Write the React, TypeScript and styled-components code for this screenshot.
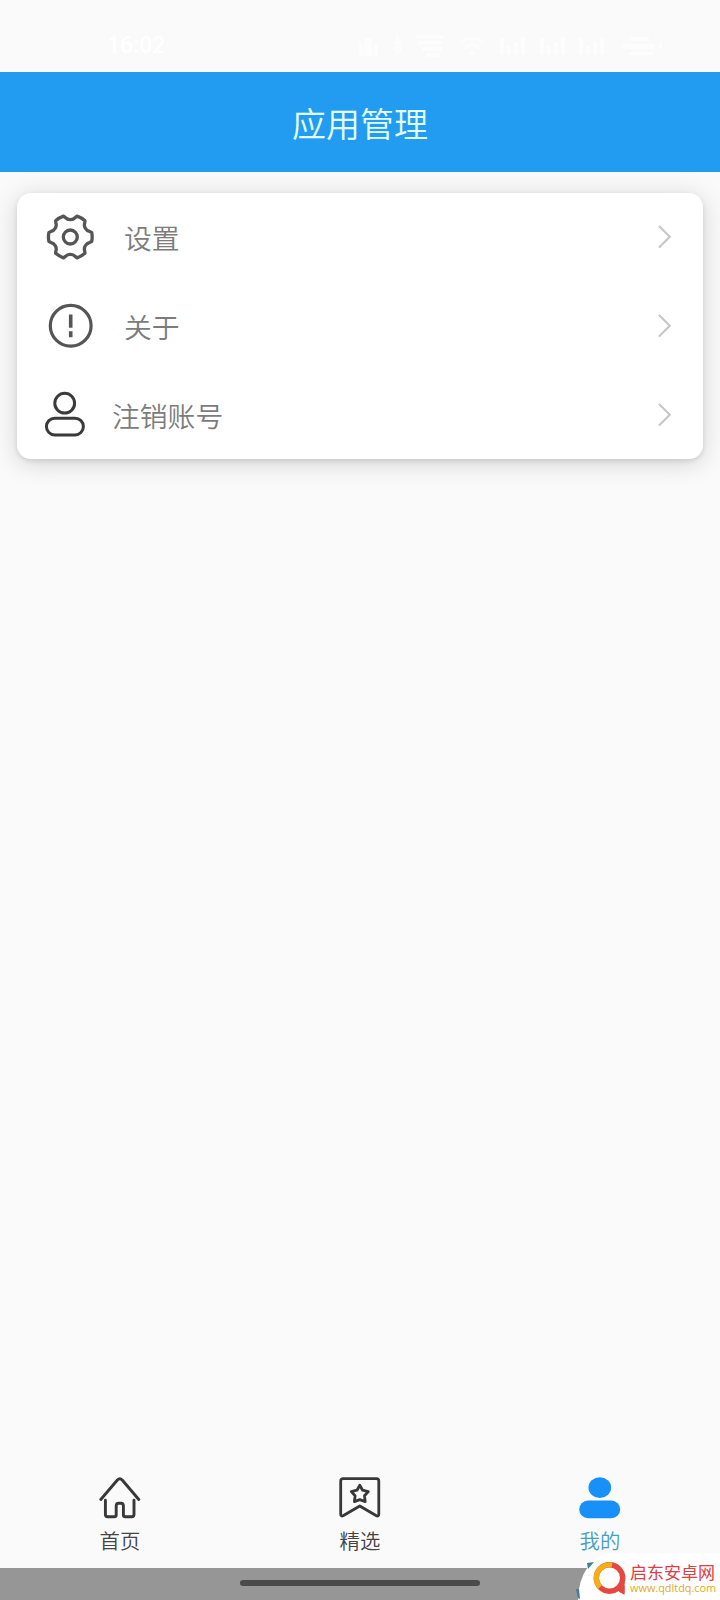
import React from "react";
import styled, { createGlobalStyle } from "styled-components";

const Global = createGlobalStyle`
  * { box-sizing: border-box; }
  html, body { margin: 0; padding: 0; background: #fafafa; }
  body { font-family: "Noto Sans CJK SC", sans-serif; font-weight: 350; overflow: hidden; }
`;

const Screen = styled.div`
  position: relative;
  display: flex;
  flex-direction: column;
  width: 720px;
  height: 1600px;
  overflow: hidden;
  background: #fafafa;
`;

const StatusBar = styled.div`
  display: flex;
  justify-content: space-between;
  align-items: center;
  flex: 0 0 72px;
  padding: 20px 57px 0 107px;
  color: #fff;
`;

const Clock = styled.span`
  font: 500 23px/28px Roboto, sans-serif;
`;

const StatusIcons = styled.div`
  display: flex;
  align-items: center;
  width: 306px;
  justify-content: space-between;
  opacity: 0.7;
`;

const AppBar = styled.header`
  display: flex;
  align-items: center;
  justify-content: center;
  flex: 0 0 100px;
  background: #219cf0;
  color: #e4ffff;
  font-size: 34px;
  line-height: 50px;
  padding-top: 1px;
`;

const Content = styled.main`
  flex: 1;
  padding: 21px 17px 0;
`;

const Card = styled.section`
  display: flex;
  flex-direction: column;
  height: 266px;
  border-radius: 14px;
  background: #fff;
  box-shadow: 0 2px 5px rgba(0, 0, 0, 0.1), 0 4px 26px rgba(0, 0, 0, 0.16);
`;

const Row = styled.div<{ $start: number; $gap: number }>`
  display: flex;
  align-items: center;
  flex: 1;
  padding: 0 31px 0 ${(p) => p.$start}px;
  gap: ${(p) => p.$gap}px;
`;

const RowLabel = styled.span`
  flex: 1;
  font-size: 27.8px;
  line-height: 40px;
  color: #7c7c7c;
`;

const TabBar = styled.nav`
  display: flex;
  flex: 0 0 98px;
`;

const Tab = styled.div<{ $active?: boolean }>`
  display: flex;
  flex: 1;
  flex-direction: column;
  align-items: center;
  padding-top: 6px;
  gap: 5px;
  font-size: 20.4px;
  line-height: 30px;
  color: ${(p) => (p.$active ? "#459fbd" : "#444")};
`;

const GestureBar = styled.footer`
  display: flex;
  justify-content: center;
  flex: 0 0 32px;
  padding-top: 12px;
  background: #969696;
`;

const GestureHandle = styled.div`
  width: 240px;
  height: 6px;
  border-radius: 3px;
  background: #4a4a4a;
`;

const Watermark = styled.div`
  position: absolute;
  right: 0;
  bottom: 0;
  display: flex;
  align-items: center;
  width: 142px;
  height: 47px;
  padding: 3px 0 0 14px;
  gap: 3px;
  background: #fff;
  border-radius: 34px 0 0 0 / 47px 0 0 0;
`;

const WatermarkEdge = styled.svg`
  position: absolute;
  right: 124px;
  bottom: 0;
`;

const WatermarkText = styled.div`
  display: flex;
  flex-direction: column;
`;

const SiteName = styled.span`
  font-size: 17px;
  line-height: 18px;
  font-weight: 400;
  color: #dc4045;
  white-space: nowrap;
`;

const SiteUrl = styled.span`
  font: 10.9px/13px "Open Sans", sans-serif;
  color: #e6a820;
  white-space: nowrap;
`;

const gearPath = (() => {
  const at = (deg: number, r: number) => {
    const a = (deg * Math.PI) / 180;
    return `${(25.3 + r * Math.cos(a)).toFixed(2)} ${(25 + r * Math.sin(a)).toFixed(2)}`;
  };
  let d = "";
  for (let i = 0; i < 6; i++) {
    const t = i * 60;
    d += `${i ? "L" : "M"}${at(t - 12, 21.9)}Q${at(t, 22.3)} ${at(t + 12, 21.9)}`;
    d += `L${at(t + 16, 20)}Q${at(t + 20, 17.6)} ${at(t + 30, 17.4)}`;
    d += `Q${at(t + 40, 17.6)} ${at(t + 44, 20)}`;
  }
  return d + "Z";
})();

const GearIcon = () => (
  <svg width="50" height="50" viewBox="0 0 50 50" fill="none" stroke="#555" strokeWidth="3.3" strokeLinejoin="round">
    <path d={gearPath} />
    <circle cx="25.3" cy="25" r="7" />
  </svg>
);

const AboutIcon = () => (
  <svg width="50" height="50" viewBox="0 0 50 50" fill="none" stroke="#555" strokeWidth="3.2">
    <circle cx="25.7" cy="24.7" r="20.4" />
    <path d="M25.7 13.6v13.2M25.7 30.2v6" strokeWidth="3.6" />
  </svg>
);

const PersonIcon = () => (
  <svg width="42" height="50" viewBox="0 0 42 50" fill="none" stroke="#3a3a3a" strokeWidth="3">
    <circle cx="20.7" cy="13.2" r="9.9" />
    <rect x="2.4" y="28.2" width="37" height="16.8" rx="8.4" />
  </svg>
);

const Chevron = () => (
  <svg width="16" height="26" viewBox="0 0 16 26" fill="none" stroke="#c6c6c6" strokeWidth="2.1" strokeLinecap="round">
    <path d="M3.5 2.5L13.8 12.7L3.5 22.9" />
  </svg>
);

const HomeIcon = () => (
  <svg width="42" height="44" viewBox="0 0 42 44" fill="none" stroke="#383838" strokeWidth="2.9" strokeLinecap="round" strokeLinejoin="round">
    <path d="M1.8 23.5L18.4 4Q20.8 1.6 23.2 4L39.8 23.5" />
    <path d="M6.4 24.2V38.6Q6.4 40.8 8.6 40.8H15.2Q17.2 40.8 17.2 39V30Q17.2 27.2 19.6 27.2H22Q24.4 27.2 24.4 30V39Q24.4 40.8 26.4 40.8H32.8Q35 40.8 35 38.6V24.2" />
  </svg>
);

const BookmarkIcon = () => (
  <svg width="42" height="44" viewBox="0 0 42 44" fill="none" stroke="#383838" strokeWidth="2.8" strokeLinejoin="round">
    <path d="M1.7 38V5Q1.7 2.6 4.1 2.6H37.4Q39.8 2.6 39.8 5V38Q39.8 41 37 39.5L20.8 30L4.5 39.5Q1.7 41 1.7 38Z" />
    <path d="M20.8 9.2L23.6 14.2L29.3 15.6L25.5 19.8L26.2 25.6L20.8 23.6L15.4 25.6L16.1 19.8L12.3 15.6L18 14.2Z" />
  </svg>
);

const ProfileIcon = () => (
  <svg width="42" height="44" viewBox="0 0 42 44" fill="#1890f8">
    <ellipse cx="20.8" cy="11.6" rx="11.3" ry="10.4" />
    <rect x="0.2" y="24.6" width="41" height="17.6" rx="8.8" />
  </svg>
);

const LogoIcon = () => (
  <svg width="35" height="38" viewBox="0 0 35 38" fill="none" strokeWidth="5.4">
    <path d="M24 29L32.5 27V36L27.5 33Z" fill="#e5483e" />
    <circle cx="17.5" cy="19" r="13.2" stroke="#e5483e" />
    <path d="M20 6.1A13.2 13.2 0 0 0 8 28.2" stroke="#f6ae18" />
    <path d="M30.6 18V34" stroke="#e5483e" strokeWidth="4" />
  </svg>
);

const SignalIcon = () => (
  <svg width="28" height="20" viewBox="0 0 28 20" fill="#fff">
    <path d="M2 2h4v17h-4zM9 10h4v9h-4zM16 6h4v13h-4zM23 1h4v18h-4z" />
  </svg>
);

const StatusGlyphs = () => (
  <StatusIcons>
    <svg width="22" height="22" viewBox="0 0 22 22" fill="#fff"><path d="M2 9h4v12H2zM7 3h8v18H7zM17 8h4v13h-4z" /></svg>
    <svg width="12" height="20" viewBox="0 0 12 20" fill="none" stroke="#fff" strokeWidth="2"><path d="M2 5l8 8-4 4V2l4 4-8 8" /></svg>
    <svg width="32" height="24" viewBox="0 0 32 24" fill="none" stroke="#fff" strokeWidth="3"><path d="M2 3h28M4 9h24M8 15h20M12 21h14" /></svg>
    <svg width="28" height="20" viewBox="0 0 28 20" fill="none" stroke="#fff" strokeWidth="3"><path d="M2 7Q14-3 26 7M7 12Q14 6 21 12M12 17h4" /></svg>
    <SignalIcon />
    <SignalIcon />
    <SignalIcon />
    <svg width="46" height="22" viewBox="0 0 46 22" fill="#fff"><path d="M12 2h20v4H12zM4 9h34v5H4zM12 17h24v3H12zM42 8h3v6h-3z" /></svg>
  </StatusIcons>
);

export default function App() {
  return (
    <Screen>
      <Global />
      <StatusBar>
        <Clock>16:02</Clock>
        <StatusGlyphs />
      </StatusBar>
      <AppBar>应用管理</AppBar>
      <Content>
        <Card>
          <Row $start={28} $gap={29}>
            <GearIcon />
            <RowLabel>设置</RowLabel>
            <Chevron />
          </Row>
          <Row $start={28} $gap={29}>
            <AboutIcon />
            <RowLabel>关于</RowLabel>
            <Chevron />
          </Row>
          <Row $start={27} $gap={26}>
            <PersonIcon />
            <RowLabel>注销账号</RowLabel>
            <Chevron />
          </Row>
        </Card>
      </Content>
      <TabBar>
        <Tab>
          <HomeIcon />
          首页
        </Tab>
        <Tab>
          <BookmarkIcon />
          精选
        </Tab>
        <Tab $active>
          <ProfileIcon />
          我的
        </Tab>
      </TabBar>
      <GestureBar>
        <GestureHandle />
      </GestureBar>
      <Watermark>
        <LogoIcon />
        <WatermarkText>
          <SiteName>启东安卓网</SiteName>
          <SiteUrl>www.qdltdq.com</SiteUrl>
        </WatermarkText>
      </Watermark>
      <WatermarkEdge width="20" height="40" viewBox="0 0 20 40" fill="#3f7f95">
        <path d="M11 3L18 2L12 9ZM0 29L3 29L4 39L2 38Z" />
      </WatermarkEdge>
    </Screen>
  );
}
